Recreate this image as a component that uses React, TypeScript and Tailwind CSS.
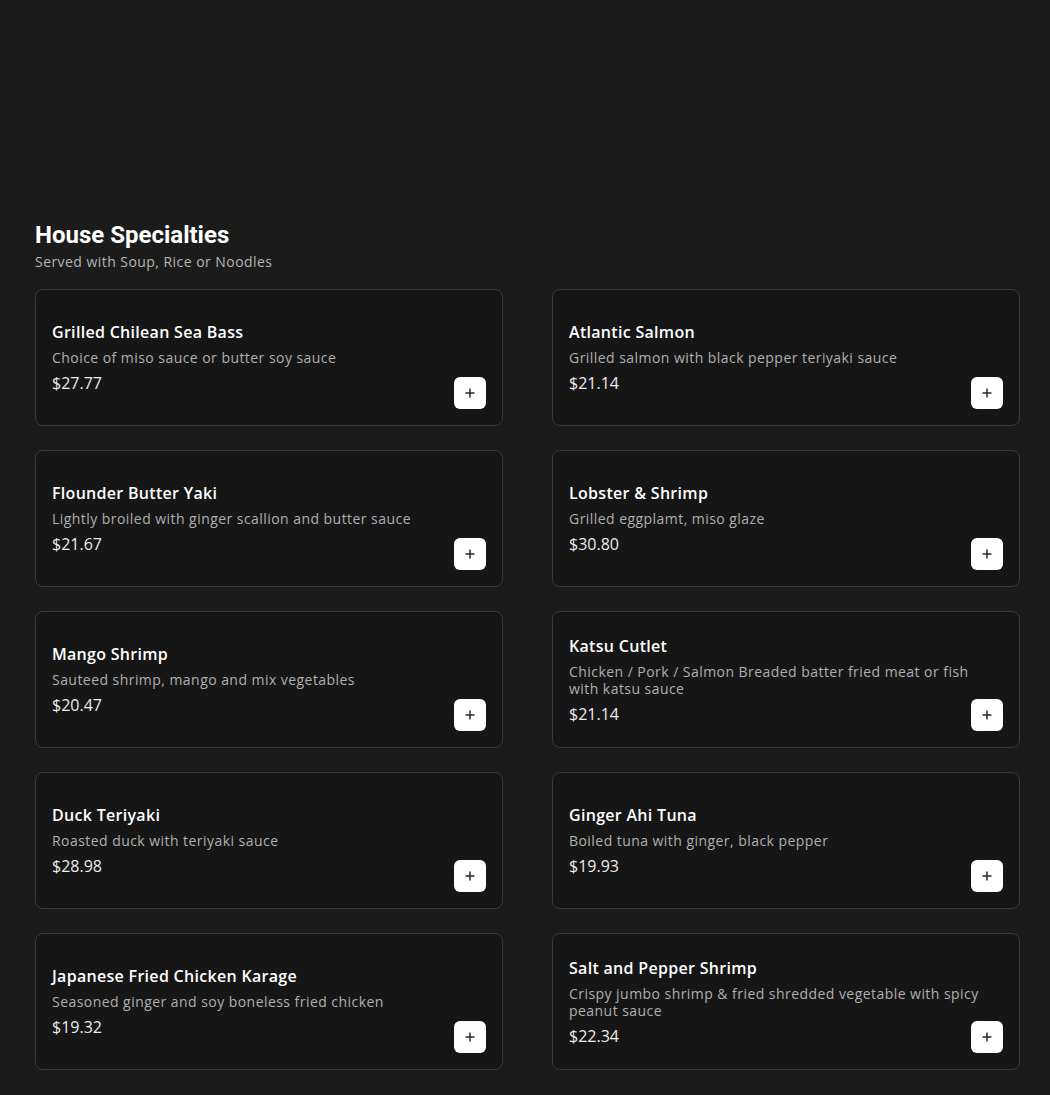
const items = [
  { name: "Grilled Chilean Sea Bass", desc: "Choice of miso sauce or butter soy sauce", price: "$27.77" },
  { name: "Atlantic Salmon", desc: "Grilled salmon with black pepper teriyaki sauce", price: "$21.14" },
  { name: "Flounder Butter Yaki", desc: "Lightly broiled with ginger scallion and butter sauce", price: "$21.67" },
  { name: "Lobster & Shrimp", desc: "Grilled eggplamt, miso glaze", price: "$30.80" },
  { name: "Mango Shrimp", desc: "Sauteed shrimp, mango and mix vegetables", price: "$20.47" },
  {
    name: "Katsu Cutlet",
    desc: "Chicken / Pork / Salmon Breaded batter fried meat or fish with katsu sauce",
    price: "$21.14",
  },
  { name: "Duck Teriyaki", desc: "Roasted duck with teriyaki sauce", price: "$28.98" },
  { name: "Ginger Ahi Tuna", desc: "Boiled tuna with ginger, black pepper", price: "$19.93" },
  { name: "Japanese Fried Chicken Karage", desc: "Seasoned ginger and soy boneless fried chicken", price: "$19.32" },
  {
    name: "Salt and Pepper Shrimp",
    desc: "Crispy jumbo shrimp & fried shredded vegetable with spicy peanut sauce",
    price: "$22.34",
  },
];

export default function App() {
  return (
    <div className="min-h-screen bg-[#1b1b1b] pl-[35px] pt-[221px] pb-6 font-['Open_Sans',sans-serif]">
      <h1 className="font-['Roboto',sans-serif] text-[24px] font-bold leading-7 text-white">
        House Specialties
      </h1>
      <p className="mt-[3px] text-[14px] leading-5 tracking-[0.45px] text-[#b5b5b5]">
        Served with Soup, Rice or Noodles
      </p>

      <div className="mt-[17px] grid grid-cols-[468px_468px] gap-x-[49px] gap-y-[24px]">
        {items.map((item) => (
          <div
            key={item.name}
            className="relative flex h-[137px] items-center rounded-lg border border-[#3a3a3a] bg-[#161616] p-4"
          >
            <div className="max-w-[420px]">
              <h3 className="text-[16px] font-semibold leading-5 tracking-[0.3px] text-white">{item.name}</h3>
              <p className="mt-[7px] text-[14px] leading-[17px] tracking-[0.45px] text-[#b0b0b0]">{item.desc}</p>
              <p className="mt-[7px] text-[16px] leading-5 text-[#ececec]">{item.price}</p>
            </div>
            <button className="absolute right-4 bottom-4 flex h-8 w-8 items-center justify-center rounded-md bg-white">
              <svg className="h-[10px] w-[10px] text-[#2a2a2a]" viewBox="0 0 10 10" fill="none" stroke="currentColor">
                <path strokeWidth={1.5} d="M5 0.5v9M0.5 5h9" />
              </svg>
            </button>
          </div>
        ))}
      </div>
    </div>
  );
}
